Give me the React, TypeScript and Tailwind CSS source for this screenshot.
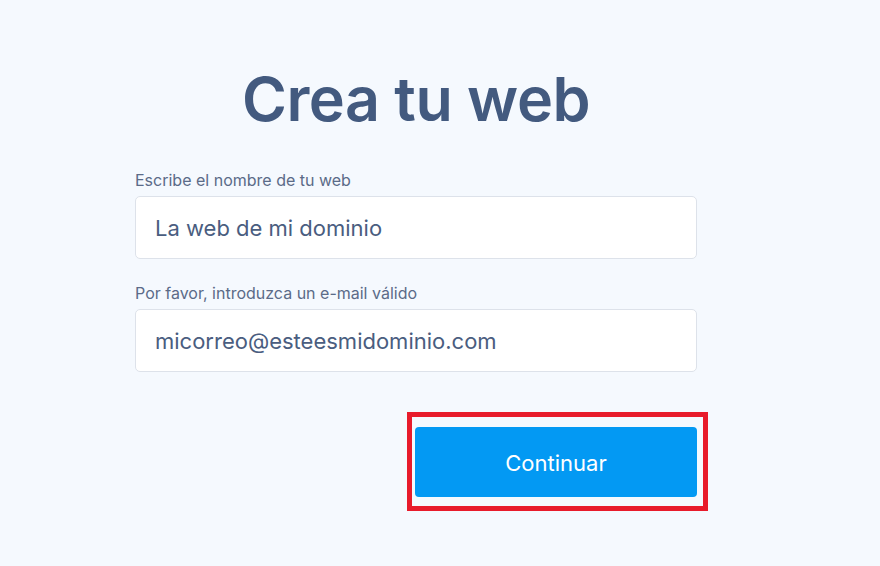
export default function App() {
  return (
    <div
      className="w-[880px] h-[566px] bg-[#f5f9fe] overflow-hidden"
      style={{ fontFamily: "Inter, 'Noto Sans', sans-serif" }}
    >
      <div className="ml-[135px] w-[562px] pt-[62px]">
        <h1 className="text-center text-[61px] leading-[74px] font-semibold text-[#435a7f] tracking-[-0.5px]">
          Crea tu web
        </h1>
        <div className="mt-[34px]">
          <label className="block text-[16px] leading-[20px] text-[#5b6b88]">
            Escribe el nombre de tu web
          </label>
          <div className="mt-[6px] h-[63px] bg-white border border-[#dde2ea] rounded-[5px] flex items-center px-[19px] pt-[2px] text-[22px] text-[#4a5d80]">
            La web de mi dominio
          </div>
        </div>
        <div className="mt-[24px]">
          <label className="block text-[16px] leading-[20px] text-[#5b6b88]">
            Por favor, introduzca un e-mail válido
          </label>
          <div className="mt-[6px] h-[63px] bg-white border border-[#dde2ea] rounded-[5px] flex items-center px-[19px] pt-[2px] text-[22px] text-[#4a5d80]">
            micorreo@esteesmidominio.com
          </div>
        </div>
        <div className="mt-[55px] flex justify-end">
          <div className="relative">
            <button className="w-[282px] h-[70px] rounded-[4px] bg-[#0399f3] text-white text-[22px] pt-[3px]">
              Continuar
            </button>
            <div className="absolute left-[-8px] top-[-15px] w-[301px] h-[99px] border-[5px] border-[#e81b2b] pointer-events-none" />
          </div>
        </div>
      </div>
    </div>
  );
}
